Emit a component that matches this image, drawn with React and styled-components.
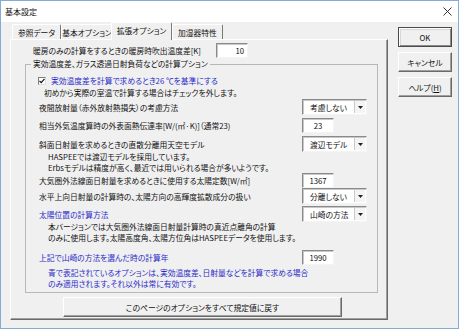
import React from 'react'
import styled, { createGlobalStyle } from 'styled-components'

const GlobalStyle = createGlobalStyle`
  html, body {
    margin: 0;
    padding: 0;
    background: #f0f0f0;
  }
  body {
    font-family: "Noto Sans CJK JP", "Noto Sans", sans-serif;
    font-size: 7.75px;
    font-feature-settings: "palt";
    color: #111;
  }
`

const Window = styled.div`
  width: 459px;
  height: 329px;
  box-sizing: border-box;
  border: 1px solid #86acd6;
  background: #f0f0f0;
  display: flex;
  flex-direction: column;
`
const TitleBar = styled.div`
  height: 21px;
  flex-shrink: 0;
  background: #fff;
  display: flex;
  align-items: center;
  justify-content: space-between;
  padding: 0 6px 0 4px;
`
const Title = styled.span`
  font-size: 8px;
`
const Body = styled.div`
  display: flex;
  padding-left: 9px;
`
const Main = styled.div`
  width: 378px;
  display: flex;
  flex-direction: column;
`
const TabStrip = styled.div`
  height: 17px;
  display: flex;
  align-items: flex-end;
  padding-left: 2px;
`
const Tab = styled.div`
  box-sizing: border-box;
  width: ${p => p.$w}px;
  height: ${p => (p.$active ? 18 : 15)}px;
  margin-left: ${p => (p.$active ? -2 : 0)}px;
  margin-bottom: ${p => (p.$active ? -1 : 0)}px;
  position: relative;
  z-index: ${p => (p.$active ? 1 : 0)};
  display: flex;
  align-items: center;
  justify-content: center;
  padding-bottom: ${p => (p.$active ? 2 : 0)}px;
  background: #f0f0f0;
  border-top: 1px solid #fff;
  border-left: 1px solid #fff;
  border-right: 1px solid #7a7a7a;
  border-radius: 2px 2px 0 0;
  white-space: nowrap;
`
const Panel = styled.div`
  height: 281px;
  box-sizing: border-box;
  border: 1px solid;
  border-color: #fff #696969 #696969 #fff;
  box-shadow: inset -1px -1px #a0a0a0;
  padding-top: 3px;
  display: flex;
  flex-direction: column;
`
const TopRow = styled.div`
  height: 15px;
  display: flex;
  align-items: center;
  padding-left: 22px;
`
const TopLabel = styled.span`
  width: 183px;
  white-space: nowrap;
`
const Group = styled.fieldset`
  margin: 0 9px 0 14px;
  padding: 0 10px 3px 5px;
  border: 1px solid #b8b8b8;
  min-width: 0;
`
const Legend = styled.legend`
  padding: 0 2px;
  line-height: 12px;
`
const GroupBody = styled.div`
  display: flex;
  flex-direction: column;
  padding-left: 8px;
`
const CheckRow = styled.div`
  height: 11px;
  margin-top: 5px;
  margin-left: -1px;
  display: flex;
  align-items: center;
  gap: 5px;
`
const CheckBox = styled.span`
  width: 8px;
  height: 8px;
  box-sizing: border-box;
  background: #fff;
  border: 1px solid;
  border-color: #808080 #e0e0e0 #e0e0e0 #808080;
  display: flex;
  align-items: center;
  justify-content: center;
`
const Note = styled.div`
  padding-left: ${p => p.$indent}px;
  margin-top: ${p => p.$mt || 0}px;
  line-height: ${p => p.$lh || 11}px;
  color: ${p => (p.$blue ? '#2b2bc8' : 'inherit')};
  white-space: nowrap;
`
const ControlRow = styled.div`
  height: ${p => p.$h}px;
  margin-top: ${p => p.$mt || 0}px;
  display: grid;
  grid-template-columns: 1fr 65px;
  align-items: center;
  color: ${p => (p.$blue ? '#2b2bc8' : 'inherit')};
  white-space: nowrap;
`
const Blue = styled.span`
  color: #2b2bc8;
`
const Field = styled.div`
  width: 32px;
  height: 15px;
  box-sizing: border-box;
  background: #fff;
  border: 1px solid;
  border-color: #8a8a8a #f4f4f4 #f4f4f4 #8a8a8a;
  box-shadow: inset 1px 1px #c8c8c8;
  display: flex;
  align-items: center;
  justify-content: ${p => (p.$right ? 'flex-end' : 'center')};
  padding-right: ${p => (p.$right ? 3 : 0)}px;
  color: #111;
`
const Select = styled.div`
  width: 65px;
  height: 16px;
  box-sizing: border-box;
  background: #fff;
  border: 1px solid;
  border-color: #8a8a8a #f4f4f4 #f4f4f4 #8a8a8a;
  box-shadow: inset 1px 1px #c8c8c8;
  display: flex;
  align-items: center;
  color: #111;
`
const SelectText = styled.span`
  flex: 1;
  padding-left: 7px;
`
const SelectArrow = styled.span`
  width: 11px;
  height: 12px;
  margin-right: 1px;
  box-sizing: border-box;
  background: #f4f4f4;
  border-left: 1px solid #c8c8c8;
  display: flex;
  align-items: center;
  justify-content: center;
`
const Button = styled.div`
  box-sizing: border-box;
  height: 20px;
  width: ${p => p.$w}px;
  display: flex;
  align-items: center;
  justify-content: center;
  background: #f0f0f0;
  border: 1px solid;
  border-color: ${p => (p.$default ? '#4a4a4a' : '#fff #6a6a6a #6a6a6a #fff')};
  box-shadow: ${p => (p.$default
    ? 'inset 1px 1px #fff, inset -1px -1px #8a8a8a, inset 2px 2px #d8d8d8'
    : 'inset -1px -1px #a0a0a0')};
  font-size: 7.8px;
`
const ResetButton = styled(Button)`
  margin: 4px 0 0 52px;
`
const SideColumn = styled.div`
  margin-left: 10px;
  padding-top: 5px;
  display: flex;
  flex-direction: column;
  gap: 5px;
`
const Underline = styled.span`
  text-decoration: underline;
`

const Arrow = () => (
  <svg width="5" height="3" viewBox="0 0 5 3">
    <polygon points="0,0 5,0 2.5,3" fill="#222" />
  </svg>
)

const Dropdown = ({ value }) => (
  <Select>
    <SelectText>{value}</SelectText>
    <SelectArrow><Arrow /></SelectArrow>
  </Select>
)

const App = () => {
  return (
    <Window>
      <GlobalStyle />
      <TitleBar>
        <Title>基本設定</Title>
        <svg width="9" height="9" viewBox="0 0 9 9">
          <path d="M0.5 0.5 L8.5 8.5 M8.5 0.5 L0.5 8.5" stroke="#333" strokeWidth="1" />
        </svg>
      </TitleBar>
      <Body>
        <Main>
          <TabStrip>
            <Tab $w={49}>参照データ</Tab>
            <Tab $w={52}>基本オプション</Tab>
            <Tab $w={61} $active>拡張オプション</Tab>
            <Tab $w={51}>加湿器特性</Tab>
          </TabStrip>
          <Panel>
            <TopRow>
              <TopLabel>暖房のみの計算をするときの暖房時吹出温度差[K]</TopLabel>
              <Field $right>10</Field>
            </TopRow>
            <Group>
              <Legend>実効温度差、ガラス透過日射負荷などの計算プション</Legend>
              <GroupBody>
                <CheckRow>
                  <CheckBox>
                    <svg width="6" height="6" viewBox="0 0 6 6">
                      <path d="M0.5 2.8 L2.2 4.6 L5.5 0.9" stroke="#111" strokeWidth="1.2" fill="none" />
                    </svg>
                  </CheckBox>
                  <Blue>実効温度差を計算で求めるとき26 ℃を基準にする</Blue>
                </CheckRow>
                <Note $indent={5} $mt={1}>初めから実際の室温で計算する場合はチェックを外します。</Note>
                <ControlRow $h={16} $mt={1}>
                  <span>夜間放射量（赤外放射熱損失）の考慮方法</span>
                  <Dropdown value="考慮しない" />
                </ControlRow>
                <ControlRow $h={16} $mt={2}>
                  <span>相当外気温度算時の外表面熱伝達率[W/(㎡·K)]（通常23)</span>
                  <Field>23</Field>
                </ControlRow>
                <ControlRow $h={16} $mt={3}>
                  <span>斜面日射量を求めるときの直散分離用天空モデル</span>
                  <Dropdown value="渡辺モデル" />
                </ControlRow>
                <Note $indent={9} $lh={10.5}>
                  HASPEEでは渡辺モデルを採用しています。<br />
                  Erbsモデルは精度が高く、最近では用いられる場合が多いようです。
                </Note>
                <ControlRow $h={15}>
                  <span>大気圏外法線面日射量を求めるときに使用する太陽定数[W/㎡]</span>
                  <Field>1367</Field>
                </ControlRow>
                <ControlRow $h={16}>
                  <span>水平上向日射量の計算時の、太陽方向の高輝度拡散成分の扱い</span>
                  <Dropdown value="分離しない" />
                </ControlRow>
                <ControlRow $h={16} $mt={2} $blue>
                  <span>太陽位置の計算方法</span>
                  <Dropdown value="山崎の方法" />
                </ControlRow>
                <Note $indent={9} $lh={10.5}>
                  本バージョンでは大気圏外法線面日射量計算時の真近点離角の計算<br />
                  のみに使用します。太陽高度角、太陽方位角はHASPEEデータを使用します。
                </Note>
                <ControlRow $h={15} $mt={7} $blue>
                  <span>上記で山崎の方法を選んだ時の計算年</span>
                  <Field>1990</Field>
                </ControlRow>
                <Note $indent={9} $lh={10.5} $mt={3} $blue>
                  青で表記されているオプションは、実効温度差、日射量などを計算で求める場合<br />
                  のみ適用されます。それ以外は常に有効です。
                </Note>
              </GroupBody>
            </Group>
            <ResetButton $w={279}>このページのオプションをすべて規定値に戻す</ResetButton>
          </Panel>
        </Main>
        <SideColumn>
          <Button $w={54} $default>OK</Button>
          <Button $w={54}>キャンセル</Button>
          <Button $w={54}>ヘルプ(<Underline>H</Underline>)</Button>
        </SideColumn>
      </Body>
    </Window>
  )
}

export default App
